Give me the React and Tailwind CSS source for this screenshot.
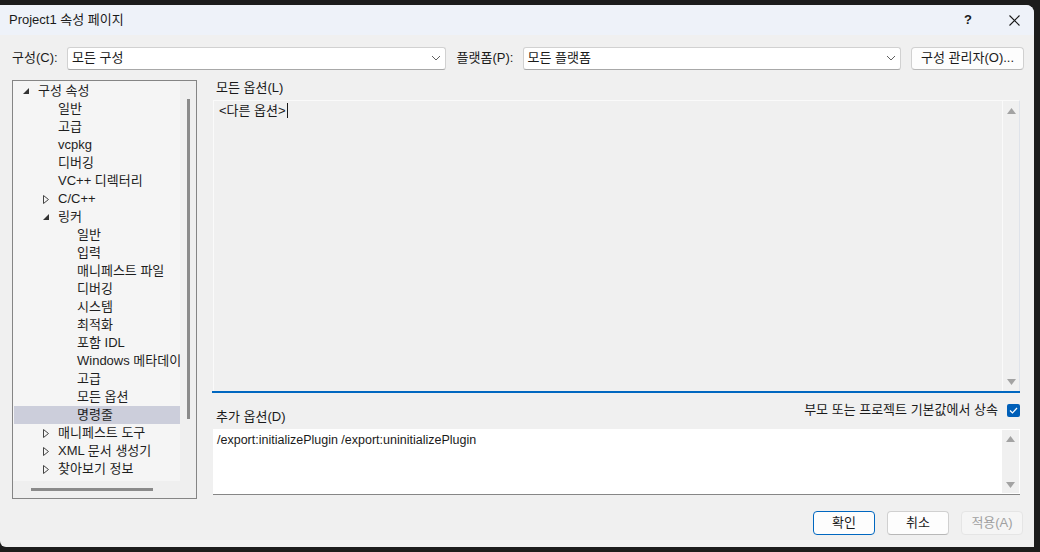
import React from "react";

const font = { fontFamily: '"Liberation Sans", "Noto Sans CJK KR", sans-serif' };

const treeItems = [
  { label: "구성 속성", level: 0, expander: "open" },
  { label: "일반", level: 1 },
  { label: "고급", level: 1 },
  { label: "vcpkg", level: 1 },
  { label: "디버깅", level: 1 },
  { label: "VC++ 디렉터리", level: 1 },
  { label: "C/C++", level: 1, expander: "closed" },
  { label: "링커", level: 1, expander: "open" },
  { label: "일반", level: 2 },
  { label: "입력", level: 2 },
  { label: "매니페스트 파일", level: 2 },
  { label: "디버깅", level: 2 },
  { label: "시스템", level: 2 },
  { label: "최적화", level: 2 },
  { label: "포함 IDL", level: 2 },
  { label: "Windows 메타데이터", level: 2 },
  { label: "고급", level: 2 },
  { label: "모든 옵션", level: 2 },
  { label: "명령줄", level: 2, selected: true },
  { label: "매니페스트 도구", level: 1, expander: "closed" },
  { label: "XML 문서 생성기", level: 1, expander: "closed" },
  { label: "찾아보기 정보", level: 1, expander: "closed" },
];

const Expander = ({ type }) =>
  type === "open" ? (
    <svg width="6" height="6" viewBox="0 0 6 6">
      <path d="M6 0 L6 6 L0 6 Z" fill="#333" />
    </svg>
  ) : (
    <svg width="6" height="9" viewBox="0 0 6 9">
      <path d="M0.5 0.5 L5.5 4.5 L0.5 8.5 Z" fill="none" stroke="#444" strokeWidth="1" />
    </svg>
  );

const Chevron = () => (
  <svg width="10" height="6" viewBox="0 0 10 6">
    <path d="M1 1 L5 5 L9 1" fill="none" stroke="#606060" strokeWidth="1" />
  </svg>
);

const ArrowUp = () => (
  <svg width="9" height="6" viewBox="0 0 9 6">
    <path d="M4.5 0 L9 6 L0 6 Z" fill="#a3a3a3" />
  </svg>
);

const ArrowDown = () => (
  <svg width="9" height="6" viewBox="0 0 9 6">
    <path d="M0 0 L9 0 L4.5 6 Z" fill="#a3a3a3" />
  </svg>
);

const Select = ({ value, width }) => (
  <div
    className={`h-[23px] ${width} bg-white border border-[#d1d1d1] border-b-[#a8a8a8] rounded-[3px] flex items-center justify-between pl-[4px] pr-[4px]`}
  >
    <span className="text-[13px] text-[#1a1a1a]">{value}</span>
    <Chevron />
  </div>
);

const TreeRow = ({ item }) => {
  const indent = item.level === 0 ? "pl-[9px]" : item.level === 1 ? "pl-[29px]" : "pl-[48px]";
  return (
    <div className={`h-[18px] flex items-center ${indent} ${item.selected ? "bg-[#cccedb]" : ""}`}>
      <div className="w-[15px] shrink-0 flex items-center justify-start">
        {item.expander && <Expander type={item.expander} />}
      </div>
      <span className="text-[13px] text-[#1e1e1e] whitespace-nowrap">{item.label}</span>
    </div>
  );
};

export default function App() {
  return (
    <div className="w-[1040px] h-[552px] bg-[#1c1c1c] pt-[5px] pr-[6px] pb-[5px]" style={font}>
      <div className="h-full bg-[#f0f0f0] rounded-tr-[8px] rounded-bl-[6px] flex flex-col overflow-hidden">
        {/* title bar */}
        <div className="h-[30px] bg-[#eef2f9] flex items-center pl-[9px] pr-[14px]">
          <span className="text-[13px] text-[#1a1a1a] flex-1">Project1 속성 페이지</span>
          <span className="text-[13px] font-bold text-[#1a1a1a] mr-[37px]">?</span>
          <svg width="11" height="11" viewBox="0 0 11 11">
            <path d="M0.5 0.5 L10.5 10.5 M10.5 0.5 L0.5 10.5" stroke="#1a1a1a" strokeWidth="1.1" />
          </svg>
        </div>

        {/* configuration row */}
        <div className="flex items-center mt-[11px] pl-[12px] pr-[10px] h-[24px]">
          <span className="text-[13px] text-[#1a1a1a] w-[55px]">구성(C):</span>
          <Select value="모든 구성" width="w-[379px]" />
          <span className="text-[13px] text-[#1a1a1a] ml-[11px] w-[66px]">플랫폼(P):</span>
          <Select value="모든 플랫폼" width="w-[379px]" />
          <button className="ml-[10px] h-[23px] w-[113px] bg-[#fdfdfd] border border-[#d0d0d0] border-b-[#b8b8b8] rounded-[4px] text-[13px] text-[#1a1a1a]">
            구성 관리자(O)...
          </button>
        </div>

        {/* main */}
        <div className="flex mt-[10px] pl-[12px] pr-[14px] h-[419px]">
          {/* tree */}
          <div className="w-[185px] h-full border border-[#858585] bg-[#efefef] flex flex-col">
            <div className="flex flex-1 min-h-0">
              <div className="w-[167px] bg-[#f5f5f5] overflow-hidden pl-[1px] pt-[1px]">
                {treeItems.map((item, i) => (
                  <TreeRow key={i} item={item} />
                ))}
              </div>
              <div className="flex-1 flex justify-center pt-[18px]">
                <div className="w-[3px] h-[320px] bg-[#8a8a8a]" />
              </div>
            </div>
            <div className="h-[17px] flex items-center pl-[18px]">
              <div className="w-[122px] h-[3px] bg-[#8a8a8a]" />
            </div>
          </div>

          {/* options */}
          <div className="flex-1 ml-[16px] flex flex-col">
            <div className="h-[20px] flex items-start pl-[3px]">
              <span className="text-[13px] text-[#1a1a1a] leading-[16px]">모든 옵션(L)</span>
            </div>
            <div className="h-[291px] border border-[#fafafa] border-r-[#dfe3ea] border-b-0 flex bg-[#f0f0f0]">
              <div className="flex-1 pl-[5px] leading-[16px] pt-[1px]">
                <span className="text-[13px] text-[#1a1a1a]">&lt;다른 옵션&gt;</span>
                <span className="inline-block w-[1px] h-[15px] bg-[#1a1a1a] align-middle ml-[1px]" />
              </div>
              <div className="w-[17px] border-l border-[#fafafa] flex flex-col items-center justify-between pt-[7px] pb-[6px]">
                <ArrowUp />
                <ArrowDown />
              </div>
            </div>
            <div className="h-[2px] bg-[#0067c0] -ml-[1px]" />
            <div className="h-[36px] flex items-center justify-between pl-[3px] pt-[12px]">
              <span className="text-[13px] text-[#1a1a1a]">추가 옵션(D)</span>
              <div className="flex items-center -mt-[14px]">
                <span className="text-[13px] text-[#1a1a1a] mr-[9px]">부모 또는 프로젝트 기본값에서 상속</span>
                <div className="w-[13px] h-[13px] rounded-[2px] bg-[#005fb8] flex items-center justify-center">
                  <svg width="9" height="7" viewBox="0 0 9 7">
                    <path d="M1 3.5 L3.5 6 L8 1" fill="none" stroke="#fff" strokeWidth="1.2" />
                  </svg>
                </div>
              </div>
            </div>
            <div className="h-[66px] bg-white border-b border-[#868686] flex">
              <div className="flex-1 pl-[4px] leading-[16px] pt-[2px]">
                <span className="text-[12.5px] text-[#1a1a1a]">
                  /export:initializePlugin /export:uninitializePlugin
                </span>
              </div>
              <div className="w-[17px] bg-[#f0f0f0] my-[1px] mr-[1px] flex flex-col items-center justify-between pt-[6px] pb-[5px]">
                <ArrowUp />
                <ArrowDown />
              </div>
            </div>
          </div>
        </div>

        {/* buttons */}
        <div className="flex justify-end items-center mt-[12px] pr-[11px] gap-[12px]">
          <button className="w-[62px] h-[24px] bg-[#fdfdfd] border border-[#0067c0] rounded-[4px] text-[13px] text-[#1a1a1a]">
            확인
          </button>
          <button className="w-[62px] h-[24px] bg-[#fdfdfd] border border-[#d0d0d0] border-b-[#b8b8b8] rounded-[4px] text-[13px] text-[#1a1a1a]">
            취소
          </button>
          <button className="w-[62px] h-[24px] bg-[#f5f5f5] border border-[#e5e5e5] rounded-[4px] text-[13px] text-[#a0a0a0]">
            적용(A)
          </button>
        </div>
      </div>
    </div>
  );
}
